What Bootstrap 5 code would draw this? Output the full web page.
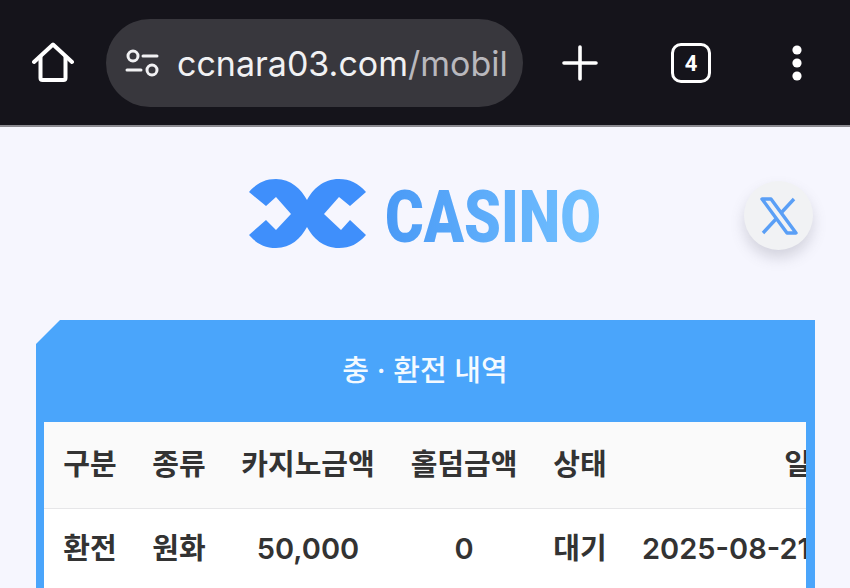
<!DOCTYPE html>
<html lang="ko">
<head>
    <meta charset="UTF-8">
    <meta name="viewport" content="width=device-width, initial-scale=1.0">
    <title>충 · 환전 내역</title>
    <link href="https://cdn.jsdelivr.net/npm/bootstrap@5.3.0/dist/css/bootstrap.min.css" rel="stylesheet">
    <style>
        html, body { height: 100%; }
        body {
            background: #f6f6fe;
            font-family: Inter, "Noto Sans CJK KR", sans-serif;
            overflow: hidden;
        }
        .browser-bar {
            height: 127px;
            background: #15141b;
            border-bottom: 2px solid #8b8a90;
            padding: 19px 0 0 0;
        }
        .home-slot { width: 106px; height: 88px; }
        .url-pill {
            width: 417px;
            height: 88px;
            background: #38373d;
            border-radius: 44px;
            padding-left: 19px;
            overflow: hidden;
        }
        .url-text {
            font-family: Inter, sans-serif;
            font-size: 34px;
            color: #f1f1f3;
            margin-left: 18px;
            white-space: nowrap;
        }
        .url-text span { color: #b9b8bd; }
        .plus-slot { width: 114px; height: 88px; }
        .tabs-slot { width: 108px; height: 88px; }
        .more-slot { width: 104px; height: 88px; }
        .tab-count {
            width: 40px;
            height: 40px;
            border: 3.5px solid #fff;
            border-radius: 10px;
            color: #fff;
            font: 700 22px Roboto, sans-serif;
        }
        .logo-area { height: 193px; position: relative; padding: 52px 0 0 249px; }
        .logo-art { filter: blur(.6px); }
        .x-button {
            position: absolute;
            left: 744px;
            top: 54px;
            width: 69px;
            height: 69px;
            border-radius: 50%;
            background: #f1f2f4;
            box-shadow: 0 8px 14px rgba(90, 90, 110, .22);
        }
        .history-panel {
            margin-left: 36px;
            width: 779px;
            background: #4aa5fb;
            padding: 0 9px 0 8px;
            clip-path: polygon(24px 0, 100% 0, 100% 100%, 0 100%, 0 24px);
        }
        .history-title {
            height: 102px;
            color: #f4faff;
            font-size: 29px;
            font-weight: 500;
        }
        .table-clip { overflow: hidden; background: #fff; }
        .history-table {
            width: 952px;
            table-layout: fixed;
            margin: 0;
            color: #333;
            font-size: 29px;
            font-weight: 600;
        }
        .history-table th, .history-table td {
            text-align: center;
            vertical-align: middle;
            padding: 0;
            white-space: nowrap;
            font-weight: 600;
        }
        .history-table th { height: 86px; background: #fafafa; border-bottom: 1px solid #e6e6e8; }
        .history-table td { height: 80px; border: 0; }
        .history-table td.date-cell { text-align: left; padding-left: 16px; }
    </style>
</head>
<body>
<div class="browser-bar d-flex">
    <div class="home-slot d-flex align-items-center justify-content-center">
        <svg width="42" height="42" viewBox="0 0 42 42" fill="none" stroke="#fff" stroke-width="4" stroke-linejoin="round" stroke-linecap="round">
            <path d="M2 20 21 2.5 40 20"/>
            <path d="M8.5 15V36a2 2 0 0 0 2 2h21a2 2 0 0 0 2-2V15"/>
        </svg>
    </div>
    <div class="url-pill d-flex align-items-center">
        <svg width="34" height="28" viewBox="0 0 34 28" fill="none" stroke="#f1f1f3" stroke-width="3" stroke-linecap="round">
            <circle cx="8" cy="7" r="5"/>
            <path d="M18 7H32M2 21H16"/>
            <circle cx="27" cy="21" r="5"/>
        </svg>
        <div class="url-text">ccnara03.com<span>/mobil</span></div>
    </div>
    <div class="plus-slot d-flex align-items-center justify-content-center">
        <svg width="36" height="36" viewBox="0 0 36 36" stroke="#fff" stroke-width="3.6" stroke-linecap="round">
            <path d="M18 2V34M2 18H34"/>
        </svg>
    </div>
    <div class="tabs-slot d-flex align-items-center justify-content-center">
        <div class="tab-count d-flex align-items-center justify-content-center">4</div>
    </div>
    <div class="more-slot d-flex align-items-center justify-content-center">
        <svg width="12" height="36" viewBox="0 0 12 36" fill="#fff">
            <circle cx="6" cy="5" r="4.6"/>
            <circle cx="6" cy="18" r="4.6"/>
            <circle cx="6" cy="31" r="4.6"/>
        </svg>
    </div>
</div>

<div class="logo-area">
    <svg class="logo-art d-block" width="354" height="72" viewBox="0 0 354 72">
        <defs>
            <linearGradient id="casinoFill" x1="0" x2="1" y1="0" y2="0">
                <stop offset="0" stop-color="#4a9af6"/>
                <stop offset="1" stop-color="#74c2ff"/>
            </linearGradient>
        </defs>
        <path fill="#3f8ffb" d="M0 13C8 4 16 0 27 0 42 0 52 10 58 21 64 10 74 0 90 0 101 0 109 4 117 13L101 27 90 18 75 35 92 51 101 41 117 56C109 65 101 69 90 69 74 69 64 59 58 48 52 59 42 69 27 69 16 69 8 65 0 56L17 41 27 51 42 35 27 18 17 27Z"/>
        <text x="136" y="63" font-family="Roboto, sans-serif" font-weight="900" font-size="72" fill="url(#casinoFill)" textLength="216" lengthAdjust="spacingAndGlyphs">CASINO</text>
    </svg>
    <div class="x-button d-flex align-items-center justify-content-center">
        <svg width="40" height="38" viewBox="0 0 40 38" fill="none" stroke="#5a9ff6" stroke-width="3.4" stroke-linejoin="round">
            <path d="M3 2H12L37 36H28Z"/>
            <path d="M35 2 22 16M17 22 4 36"/>
        </svg>
    </div>
</div>

<div class="history-panel">
    <div class="history-title d-flex align-items-center justify-content-center">충 · 환전 내역</div>
    <div class="table-clip">
        <table class="table history-table">
            <colgroup>
                <col style="width: 92px">
                <col style="width: 86px">
                <col style="width: 172px">
                <col style="width: 140px">
                <col style="width: 92px">
                <col style="width: 370px">
            </colgroup>
            <thead>
                <tr><th>구분</th><th>종류</th><th>카지노금액</th><th>홀덤금액</th><th>상태</th><th>일시</th></tr>
            </thead>
            <tbody>
                <tr><td>환전</td><td>원화</td><td>50,000</td><td>0</td><td>대기</td><td class="date-cell">2025-08-21 10:32:15</td></tr>
            </tbody>
        </table>
    </div>
</div>
<script src="https://cdn.jsdelivr.net/npm/bootstrap@5.3.0/dist/js/bootstrap.bundle.min.js"></script>
</body>
</html>
